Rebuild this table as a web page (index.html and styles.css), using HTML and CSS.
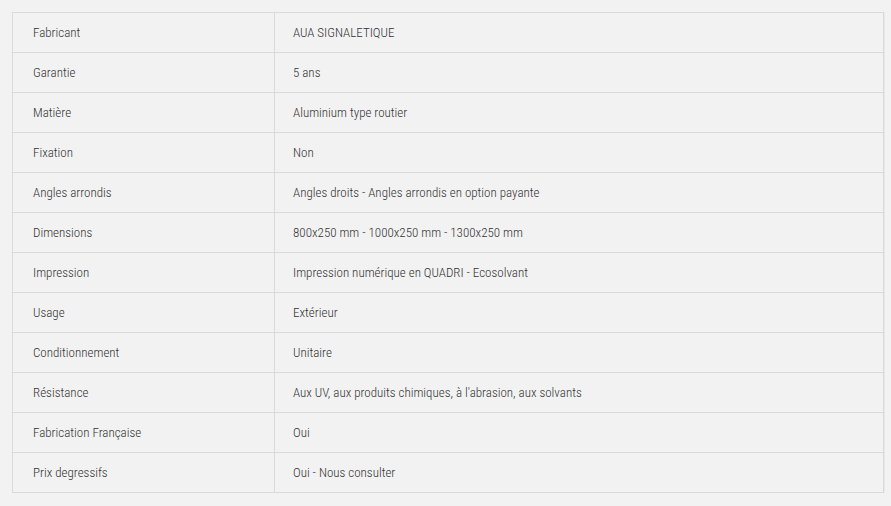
FILE: index.html
```html
<!DOCTYPE html>
<html lang="fr">
<head>
<meta charset="utf-8">
<link rel="stylesheet" href="styles.css">
</head>
<body>
<table class="specs">
<tbody>
<tr><td class="label">Fabricant</td><td class="value">AUA SIGNALETIQUE</td></tr>
<tr><td class="label">Garantie</td><td class="value">5 ans</td></tr>
<tr><td class="label">Matière</td><td class="value">Aluminium type routier</td></tr>
<tr><td class="label">Fixation</td><td class="value">Non</td></tr>
<tr><td class="label">Angles arrondis</td><td class="value">Angles droits - Angles arrondis en option payante</td></tr>
<tr><td class="label">Dimensions</td><td class="value">800x250 mm - 1000x250 mm - 1300x250 mm</td></tr>
<tr><td class="label">Impression</td><td class="value">Impression numérique en QUADRI - Ecosolvant</td></tr>
<tr><td class="label">Usage</td><td class="value">Extérieur</td></tr>
<tr><td class="label">Conditionnement</td><td class="value">Unitaire</td></tr>
<tr><td class="label">Résistance</td><td class="value">Aux UV, aux produits chimiques, à l'abrasion, aux solvants</td></tr>
<tr><td class="label">Fabrication Française</td><td class="value">Oui</td></tr>
<tr><td class="label">Prix degressifs</td><td class="value">Oui - Nous consulter</td></tr>
</tbody>
</table>
</body>
</html>
```
FILE: styles.css
```css
html, body {
  margin: 0;
  padding: 0;
  background: #f2f2f2;
}
body {
  padding: 12px 7px 0 12px;
  font-family: "Roboto Condensed", Roboto, "Liberation Sans", Arial, sans-serif;
  font-stretch: condensed;
  font-weight: 300;
  font-size: 13px;
  color: #333;
}
.specs {
  width: 872px;
  border-collapse: collapse;
  border: 1px solid #dadada;
  box-shadow: 1px 1px 0 #e8e8e8;
}
.specs td {
  height: 39px;
  padding: 0 0 0 20px;
  border-bottom: 1px solid #dadada;
  vertical-align: middle;
  text-align: left;
}
.specs td.label {
  width: 241px;
  border-right: 1px solid #dadada;
}
.specs td.value {
  padding-left: 18px;
}
```
